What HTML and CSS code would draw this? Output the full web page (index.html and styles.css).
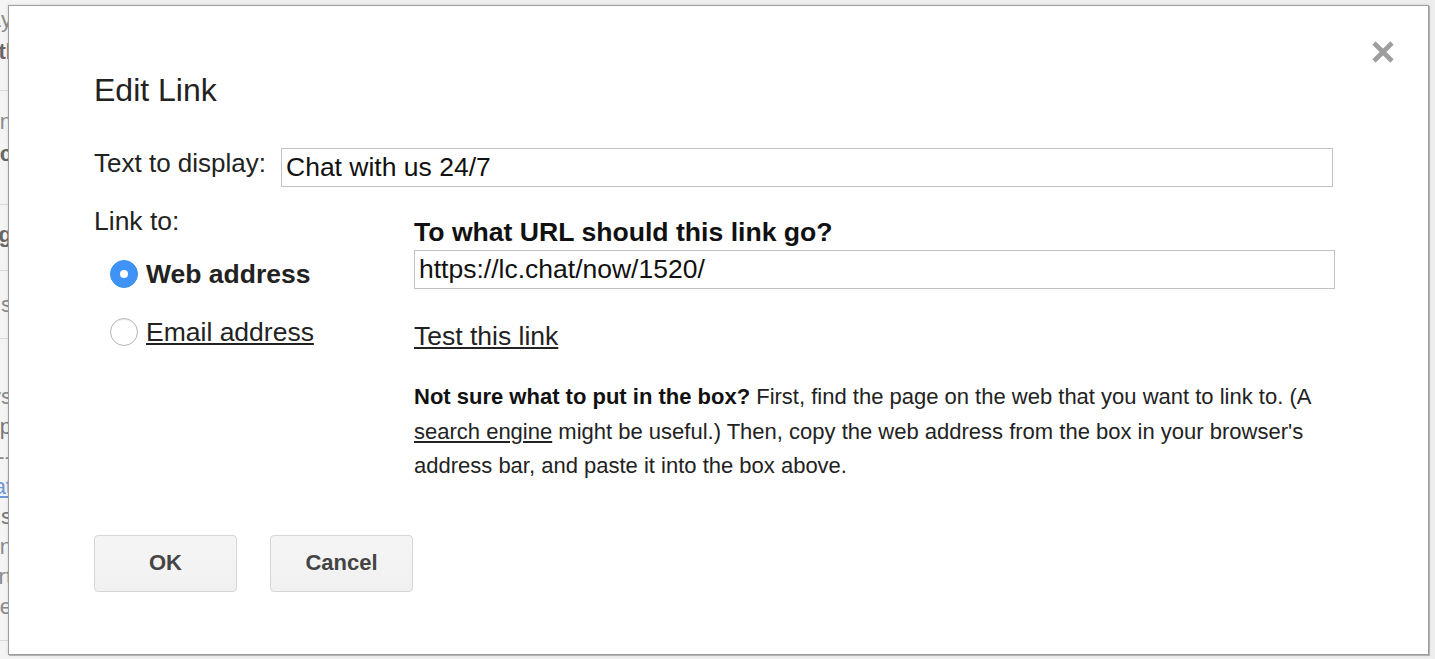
FILE: index.html
```html
<!DOCTYPE html>
<html lang="en">
<head>
<meta charset="utf-8">
<title>Edit Link</title>
<link rel="stylesheet" href="styles.css">
</head>
<body>
<div class="backdrop">
  <div class="bg-col">
    <div class="bg-row r1"><p>Sway</p><p class="dark">Settl</p></div>
    <div class="bg-row r2"><p>Open</p><p class="dark">Sync</p></div>
    <div class="bg-row r3"><p class="dark">Billing</p></div>
    <div class="bg-row r4"><p>Tags</p></div>
    <div class="bg-row r5"><p>Always</p><p class="mid">Help</p><p>----</p><p class="blue">Chat</p><p class="mid">Tools</p><p>Learn</p><p>Start</p><p>Here</p></div>
  </div>
</div>

<div class="dialog">
  <button class="close" aria-label="Close">
    <svg width="22" height="22" viewBox="0 0 22 22"><path d="M2 2 L20 20 M20 2 L2 20" stroke="#9e9e9e" stroke-width="4.6" fill="none"/></svg>
  </button>
  <h1 class="title">Edit Link</h1>

  <div class="text-row">
    <label class="text-label" for="disp">Text to display:</label>
    <input id="disp" class="field field-text" type="text" value="Chat with us 24/7">
  </div>

  <div class="link-section">
    <div class="link-left">
      <div class="link-to">Link to:</div>
      <div class="radio-row first">
        <span class="radio on"></span><span class="opt-on">Web address</span>
      </div>
      <div class="radio-row">
        <span class="radio"></span><a class="opt-link" href="#">Email address</a>
      </div>
    </div>
    <div class="link-right">
      <div class="url-q">To what URL should this link go?</div>
      <input class="field field-url" type="text" value="https://lc.chat/now/1520/">
      <div class="test-wrap"><a class="test-link" href="#">Test this link</a></div>
      <p class="help"><b>Not sure what to put in the box?</b> First, find the page on the web that you want to link to. (A <a href="#">search engine</a> might be useful.) Then, copy the web address from the box in your browser's address bar, and paste it into the box above.</p>
    </div>
  </div>

  <div class="buttons">
    <button class="btn">OK</button>
    <button class="btn">Cancel</button>
  </div>
</div>
</body>
</html>
```

FILE: styles.css
```css
html, body {
  margin: 0;
  padding: 0;
}
body {
  width: 1435px;
  height: 659px;
  background: #eeeeee;
  font-family: "Liberation Sans", Arial, Helvetica, sans-serif;
  color: #222;
  overflow: hidden;
  position: relative;
}

/* page beneath the modal */
.backdrop {
  width: 40px;
  height: 659px;
  background: #f4f4f4;
}
.bg-col {
  display: flex;
  flex-direction: column;
}
.bg-row {
  border-bottom: 1px solid #dadada;
  display: flex;
  flex-direction: column;
  align-items: flex-end;
  padding-right: 28px;
  box-sizing: border-box;
}
.bg-row p {
  margin: 0;
  font-size: 22px;
  line-height: 32px;
  color: #8a8a8a;
  white-space: nowrap;
}
.bg-row p.dark { color: #666; font-weight: bold; }
.bg-row p.mid { color: #777; }
.bg-row p.blue { color: #6f98d6; text-decoration: underline; }
.r1 { height: 91px; padding-top: 4px; }
.r2 { height: 114px; padding-top: 15px; }
.r3 { height: 66px; padding-top: 14px; }
.r4 { height: 68px; padding-top: 18px; }
.r5 { height: 302px; padding-top: 43px; }
.r5 p { line-height: 30px; }

/* modal */
.dialog {
  position: absolute;
  left: 8px;
  top: 5px;
  width: 1421px;
  height: 650px;
  box-sizing: border-box;
  background: #fff;
  border: 1px solid #9d9d9d;
  box-shadow: 1px 1px 0 #b3b3b3, 0 0 3px rgba(0,0,0,0.12);
  padding: 65px 0 0 85px;
}
.close {
  position: absolute;
  right: 34px;
  top: 35px;
  width: 22px;
  height: 22px;
  padding: 0;
  border: 0;
  background: none;
  display: block;
}
.close svg { display: block; }

.title {
  margin: 0;
  font-size: 32px;
  line-height: 38px;
  font-weight: normal;
  color: #222;
}

.text-row {
  display: flex;
  align-items: flex-start;
  margin-top: 39px;
}
.text-label {
  width: 187px;
  font-size: 26px;
  line-height: 30px;
  white-space: nowrap;
}
.field {
  box-sizing: border-box;
  height: 39px;
  border: 1px solid #c2c2c2;
  border-radius: 0;
  padding: 0 4px;
  margin: 0;
  font-family: "Liberation Sans", Arial, Helvetica, sans-serif;
  font-size: 26.5px;
  color: #111;
  background: #fff;
  outline: none;
  display: block;
}
.field-text { width: 1052px; }
.field-url { width: 921px; margin-top: 3px; }

.link-section {
  display: flex;
  margin-top: 19px;
}
.link-left {
  width: 320px;
  flex: none;
}
.link-to {
  font-size: 26.5px;
  line-height: 30px;
}
.radio-row {
  display: flex;
  align-items: center;
  height: 30px;
  margin-top: 28px;
  padding-left: 16px;
  font-size: 26.5px;
  line-height: 30px;
}
.radio-row.first { margin-top: 23px; }
.radio {
  width: 28px;
  height: 28px;
  box-sizing: border-box;
  border-radius: 50%;
  border: 1px solid #b5b5b5;
  background: #fff;
  box-shadow: inset 0 1px 1px rgba(0,0,0,0.08);
  margin-right: 8px;
  flex: none;
  display: flex;
  align-items: center;
  justify-content: center;
}
.radio.on {
  background: #3f93f6;
  border-color: #3a8df2;
  box-shadow: none;
}
.radio.on::after {
  content: "";
  width: 8px;
  height: 8px;
  border-radius: 50%;
  background: #fff;
}
.opt-on {
  font-weight: bold;
  color: #222;
}
.opt-link, .test-link, .help a {
  color: #222;
  text-decoration: underline;
}

.link-right {
  padding-top: 11px;
  flex: none;
  width: 921px;
}
.url-q {
  font-size: 26.6px;
  line-height: 30px;
  font-weight: bold;
  color: #111;
}
.test-wrap {
  margin-top: 32px;
  font-size: 26.5px;
  line-height: 30px;
}
.help {
  margin: 29px 0 0;
  width: 920px;
  font-size: 22px;
  line-height: 34.5px;
  color: #222;
}
.help b { color: #111; }

.buttons {
  display: flex;
  gap: 33px;
  margin-top: 51px;
}
.btn {
  width: 143px;
  height: 57px;
  box-sizing: border-box;
  border: 1px solid #d6d6d6;
  border-radius: 4px;
  background: linear-gradient(#f5f5f5, #f1f1f1);
  font-family: "Liberation Sans", Arial, Helvetica, sans-serif;
  font-size: 22px;
  font-weight: bold;
  color: #444;
  padding: 0;
  margin: 0;
}
```
